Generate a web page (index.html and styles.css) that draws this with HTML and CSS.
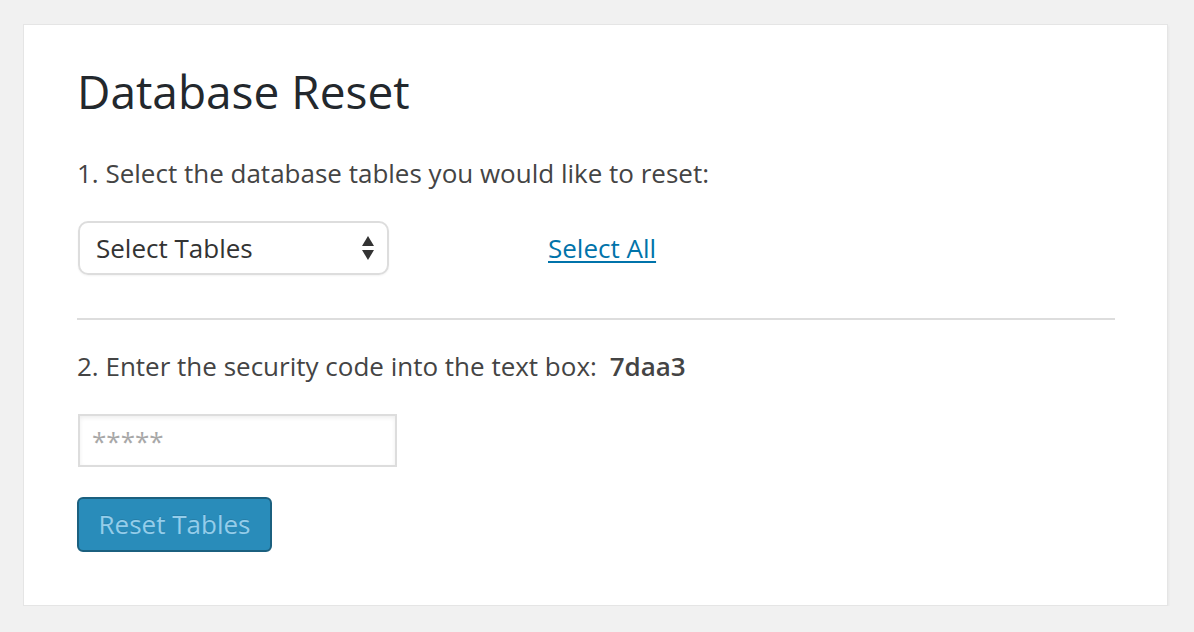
FILE: index.html
```html
<!DOCTYPE html>
<html lang="en">
<head>
<meta charset="utf-8">
<title>Database Reset</title>
<link rel="stylesheet" href="styles.css">
</head>
<body>
<div class="card">
  <h2 class="title">Database Reset</h2>
  <p class="step">1. Select the database tables you would like to reset:</p>
  <div class="select-row">
    <div class="select">
      <span class="select-label">Select Tables</span>
      <svg class="select-arrows" width="14" height="26" viewBox="0 0 14 26">
        <path d="M7 1 L13 11 L1 11 Z" fill="#333"/>
        <path d="M1 15 L13 15 L7 25 Z" fill="#333"/>
      </svg>
    </div>
    <a class="select-all" href="#">Select All</a>
  </div>
  <hr class="divider">
  <p class="step">2. Enter the security code into the text box: <strong class="code">7daa3</strong></p>
  <div class="code-input"><span class="placeholder">*****</span></div>
  <div class="button">Reset Tables</div>
</div>
</body>
</html>
```

FILE: styles.css
```css
html, body {
  margin: 0;
  padding: 0;
}
body {
  background: #f1f1f1;
  font-family: "Open Sans", "Liberation Sans", sans-serif;
  color: #444;
  padding-top: 24px;
}
.card {
  margin: 0 26px 0 23px;
  background: #fff;
  border: 1px solid #e5e5e5;
  box-shadow: 1px 2px 2px rgba(0,0,0,0.04);
  padding: 39px 52px 53px 53px;
}
.title {
  margin: 0;
  font-size: 46px;
  font-weight: 400;
  line-height: 55px;
  color: #23282d;
}
.step {
  margin: 36px 0 0;
  font-size: 26px;
  line-height: 36px;
  color: #444;
}
.code {
  font-weight: 600;
  margin-left: 6px;
}
.select-row {
  display: flex;
  align-items: center;
  gap: 159px;
  margin-top: 30px;
}
.select {
  box-sizing: border-box;
  width: 311px;
  height: 54px;
  margin-left: 1px;
  border: 2px solid #ddd;
  border-radius: 10px;
  display: flex;
  align-items: center;
  justify-content: space-between;
  padding: 0 12px 0 16px;
  font-size: 26px;
  color: #333;
  box-shadow: 0 1px 2px rgba(0,0,0,0.05);
}
.select-label {
  line-height: 30px;
}
.select-arrows {
  display: block;
}
.select-all {
  font-size: 26px;
  color: #0073aa;
  text-decoration: underline;
  text-underline-offset: 3px;
}
.divider {
  margin: 43px 0 0;
  border: 0;
  border-top: 2px solid #ddd;
  height: 0;
}
.divider + .step {
  margin-top: 28px;
}
.code-input {
  box-sizing: border-box;
  width: 319px;
  height: 53px;
  margin: 30px 0 0 1px;
  border: 2px solid #ddd;
  box-shadow: inset 0 2px 4px rgba(0,0,0,0.07);
  padding: 8px 12px;
  font-size: 26px;
  line-height: 34px;
}
.placeholder {
  color: #a8a8a8;
}
.button {
  box-sizing: border-box;
  width: 195px;
  height: 55px;
  margin-top: 30px;
  background: #298cba;
  border: 2px solid #1b607f;
  border-radius: 6px;
  color: #94cdea;
  font-size: 26px;
  line-height: 50px;
  text-align: center;
  text-shadow: 0 -1px 0 rgba(0,0,0,0.1);
}
```
